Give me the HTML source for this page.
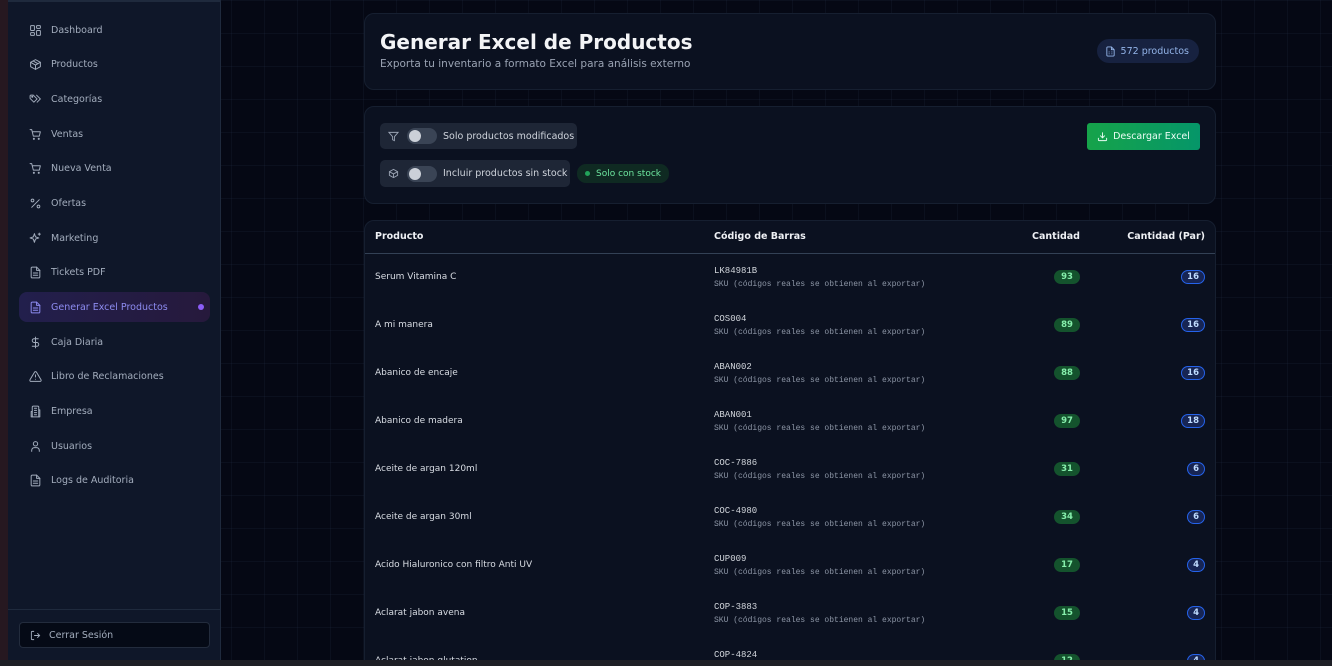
<!DOCTYPE html>
<html><head><meta charset="utf-8"><style>
*{box-sizing:border-box;margin:0;padding:0}
html,body{width:1332px;height:666px;overflow:hidden}
body{background:#050814;font-family:"DejaVu Sans","Liberation Sans",sans-serif;position:relative;
background-image:linear-gradient(rgba(40,50,80,.18) 1px,transparent 1px),linear-gradient(90deg,rgba(40,50,80,.18) 1px,transparent 1px);background-size:33px 33px}
.lstrip{position:absolute;left:0;top:0;width:8px;height:666px;background:#261820}
.bstrip{position:absolute;left:0;top:660px;width:1332px;height:6px;background:#1e1f26;z-index:5}
.side{position:absolute;left:8px;top:0;width:213px;height:660px;background:#0f1729;border-right:1px solid #1f2a3d;border-top:2px solid #1f2a3d}
.nav{position:absolute;left:11px;width:191px;height:30px;display:flex;align-items:center;font-size:9.5px;color:#a3adbd;padding-left:10px}
.nav svg{width:13px;height:13px;margin-right:9px;stroke:#a3adbd;fill:none;stroke-width:1.8;stroke-linecap:round;stroke-linejoin:round}
.nav.act{background:linear-gradient(90deg,#221f4c,#26193c);border-radius:8px;color:#8d8bf0}
.nav.act svg{stroke:#8d8bf0}
.dot{position:absolute;right:6px;top:12px;width:6px;height:6px;border-radius:50%;background:#8b5cf6}
.logout{position:absolute;left:11px;top:620px;width:191px;height:26px;border:1px solid #232c3d;border-radius:4px;background:#050a16;font-size:9.5px;color:#a3adbd;display:flex;align-items:center;padding-left:10px}
.card{position:absolute;left:364px;width:852px;background:#0b1120;border:1px solid #161f30;border-radius:10px}
h1{position:absolute;left:15px;top:16px;font-size:20px;color:#f3f4f6;font-weight:bold}
.sub{position:absolute;left:15px;top:44px;font-size:10.5px;color:#9aa3b3}
.pill{position:absolute;display:flex;align-items:center;font-size:9.5px}
.tog{width:30px;height:16px;background:#3a4455;border-radius:8px;position:relative;margin:0 6px 0 8px}
.tog:after{content:"";position:absolute;left:2px;top:2px;width:12px;height:12px;border-radius:50%;background:#cbd0d8}
table{border-collapse:collapse;width:100%;font-size:9px;table-layout:fixed}
th{height:32px;text-align:left;color:#eef0f4;font-size:9.5px;font-weight:bold;border-bottom:1px solid #334155}
td{height:48px;color:#d8dce3}
.code{font-family:"Liberation Mono","DejaVu Sans Mono",monospace;font-size:9px;color:#d1d5db}
.code small{display:block;font-size:8px;color:#8d96a6;margin-top:4px}
.g{display:inline-block;background:#14532d;color:#86efac;border-radius:8px;font-size:8.5px;font-weight:bold;padding:2px 0;width:26px;text-align:center}
.b{display:inline-block;border:1px solid #2563eb;background:#172554;color:#bfdbfe;border-radius:8px;font-size:8.5px;font-weight:bold;padding:1px 5px;text-align:center}
</style></head><body>
<div class="lstrip"></div>
<div class="side">
<div class="nav" style="top:13px"><svg viewBox="0 0 24 24"><rect x="3" y="3" width="7" height="9" rx="1"/><rect x="14" y="3" width="7" height="5" rx="1"/><rect x="14" y="12" width="7" height="9" rx="1"/><rect x="3" y="16" width="7" height="5" rx="1"/></svg>Dashboard</div>
<div class="nav" style="top:47px"><svg viewBox="0 0 24 24"><path d="M21 8l-9-5-9 5v8l9 5 9-5z"/><path d="M3 8l9 5 9-5M12 13v8M7.5 5.5l9 5"/></svg>Productos</div>
<div class="nav" style="top:82px"><svg viewBox="0 0 24 24"><path d="M2 5v5l7 7 6-6-7-7H3z"/><circle cx="6" cy="7" r="1"/><path d="M14 4l7 7-6 6"/></svg>Categorías</div>
<div class="nav" style="top:117px"><svg viewBox="0 0 24 24"><path d="M2 3h3l3 12h11l2-8H6"/><circle cx="9" cy="20" r="1"/><circle cx="18" cy="20" r="1"/></svg>Ventas</div>
<div class="nav" style="top:151px"><svg viewBox="0 0 24 24"><path d="M2 3h3l3 12h11l2-8H6"/><circle cx="9" cy="20" r="1"/><circle cx="18" cy="20" r="1"/></svg>Nueva Venta</div>
<div class="nav" style="top:186px"><svg viewBox="0 0 24 24"><path d="M19 5L5 19"/><circle cx="6.5" cy="6.5" r="2.5"/><circle cx="17.5" cy="17.5" r="2.5"/></svg>Ofertas</div>
<div class="nav" style="top:221px"><svg viewBox="0 0 24 24"><path d="M10 3l2 6 6 2-6 2-2 6-2-6-6-2 6-2z"/><path d="M19 2v4M17 4h4"/></svg>Marketing</div>
<div class="nav" style="top:255px"><svg viewBox="0 0 24 24"><path d="M14 2H6a2 2 0 0 0-2 2v16a2 2 0 0 0 2 2h12a2 2 0 0 0 2-2V8z"/><path d="M14 2v6h6M8 13h8M8 17h8"/></svg>Tickets PDF</div>
<div class="nav act" style="top:290px"><svg viewBox="0 0 24 24"><path d="M14 2H6a2 2 0 0 0-2 2v16a2 2 0 0 0 2 2h12a2 2 0 0 0 2-2V8z"/><path d="M14 2v6h6M8 13h8M8 17h8"/></svg>Generar Excel Productos<span class="dot"></span></div>
<div class="nav" style="top:325px"><svg viewBox="0 0 24 24"><path d="M12 2v20M17 5H9.5a3.5 3.5 0 0 0 0 7h5a3.5 3.5 0 0 1 0 7H6"/></svg>Caja Diaria</div>
<div class="nav" style="top:359px"><svg viewBox="0 0 24 24"><path d="M10.3 3.9L1.8 18a2 2 0 0 0 1.7 3h17a2 2 0 0 0 1.7-3L13.7 3.9a2 2 0 0 0-3.4 0z"/><path d="M12 9v4M12 17h0"/></svg>Libro de Reclamaciones</div>
<div class="nav" style="top:394px"><svg viewBox="0 0 24 24"><path d="M6 22V4a2 2 0 0 1 2-2h8a2 2 0 0 1 2 2v18z"/><path d="M6 12H4v10h2M18 9h2v13h-2M10 6h4M10 10h4M10 14h4M10 18h4"/></svg>Empresa</div>
<div class="nav" style="top:429px"><svg viewBox="0 0 24 24"><circle cx="12" cy="7" r="4"/><path d="M5 21v-2a5 5 0 0 1 5-5h4a5 5 0 0 1 5 5v2"/></svg>Usuarios</div>
<div class="nav" style="top:463px"><svg viewBox="0 0 24 24"><path d="M14 2H6a2 2 0 0 0-2 2v16a2 2 0 0 0 2 2h12a2 2 0 0 0 2-2V8z"/><path d="M14 2v6h6M8 13h8M8 17h8"/></svg>Logs de Auditoria</div>
<div style="position:absolute;left:0;top:607px;width:212px;border-top:1px solid #1f2a3d"></div>
<div class="logout"><svg viewBox="0 0 24 24" style="width:11px;height:11px;margin-right:8px;stroke:#a3adbd;fill:none;stroke-width:2"><path d="M9 21H5a2 2 0 0 1-2-2V5a2 2 0 0 1 2-2h4M16 17l5-5-5-5M21 12H9"/></svg>Cerrar Sesión</div>
</div>

<div class="card" style="top:13px;height:77px">
<h1>Generar Excel de Productos</h1>
<div class="sub">Exporta tu inventario a formato Excel para análisis externo</div>
<div class="pill" style="right:16px;top:25px;height:24px;padding:0 10px 0 8px;background:#172240;border-radius:12px;color:#93b4e8"><svg viewBox="0 0 24 24" width="11" height="11" style="margin-right:5px;stroke:#93b4e8;fill:none;stroke-width:2"><path d="M14 2H6a2 2 0 0 0-2 2v16a2 2 0 0 0 2 2h12a2 2 0 0 0 2-2V8z"/><path d="M14 2v6h6M8 13h2M14 13h2M8 17h2M14 17h2"/></svg>572 productos</div>
</div>

<div class="card" style="top:106px;height:98px">
<div class="pill" style="left:15px;top:16px;height:26px;width:197px;background:#1e2636;border-radius:5px;color:#cfd4dc;padding-left:8px"><svg viewBox="0 0 24 24" width="11" height="11" style="stroke:#9aa3b3;fill:none;stroke-width:2"><path d="M22 3H2l8 9.5V19l4 2v-8.5z"/></svg><span class="tog"></span>Solo productos modificados</div>
<div class="pill" style="left:15px;top:53px;height:27px;width:190px;background:#1e2636;border-radius:5px;color:#cfd4dc;padding-left:8px"><svg viewBox="0 0 24 24" width="11" height="11" style="stroke:#9aa3b3;fill:none;stroke-width:2"><path d="M21 8l-9-5-9 5v8l9 5 9-5z"/><path d="M3 8l9 5 9-5M12 13v8"/></svg><span class="tog"></span>Incluir productos sin stock</div>
<div class="pill" style="left:212px;top:57px;height:19px;padding:0 8px;background:#0f2a22;border-radius:9px;color:#6ee7a0;font-size:9px"><span style="width:5px;height:5px;border-radius:50%;background:#22a35a;margin-right:6px"></span>Solo con stock</div>
<div class="pill" style="right:15px;top:16px;height:27px;width:113px;justify-content:center;background:linear-gradient(90deg,#16a34a,#059669);border-radius:3px;color:#ecfdf5"><svg viewBox="0 0 24 24" width="11" height="11" style="margin-right:5px;stroke:#ecfdf5;fill:none;stroke-width:2"><path d="M21 15v4a2 2 0 0 1-2 2H5a2 2 0 0 1-2-2v-4M7 10l5 5 5-5M12 15V3"/></svg>Descargar Excel</div>
</div>

<div class="card" style="top:220px;height:450px;overflow:hidden">
<table>
<colgroup><col style="width:349px"><col style="width:250px"><col style="width:116px"><col></colgroup>
<tr><th style="padding-left:10px">Producto</th><th>Código de Barras</th><th style="text-align:right">Cantidad</th><th style="text-align:right;padding-right:10px">Cantidad (Par)</th></tr>
<tr><td style="padding-left:10px">Serum Vitamina C</td><td class="code">LK84981B<small>SKU (códigos reales se obtienen al exportar)</small></td><td style="text-align:right"><span class="g">93</span></td><td style="text-align:right;padding-right:10px"><span class="b">16</span></td></tr>
<tr><td style="padding-left:10px">A mi manera</td><td class="code">COS004<small>SKU (códigos reales se obtienen al exportar)</small></td><td style="text-align:right"><span class="g">89</span></td><td style="text-align:right;padding-right:10px"><span class="b">16</span></td></tr>
<tr><td style="padding-left:10px">Abanico de encaje</td><td class="code">ABAN002<small>SKU (códigos reales se obtienen al exportar)</small></td><td style="text-align:right"><span class="g">88</span></td><td style="text-align:right;padding-right:10px"><span class="b">16</span></td></tr>
<tr><td style="padding-left:10px">Abanico de madera</td><td class="code">ABAN001<small>SKU (códigos reales se obtienen al exportar)</small></td><td style="text-align:right"><span class="g">97</span></td><td style="text-align:right;padding-right:10px"><span class="b">18</span></td></tr>
<tr><td style="padding-left:10px">Aceite de argan 120ml</td><td class="code">COC-7886<small>SKU (códigos reales se obtienen al exportar)</small></td><td style="text-align:right"><span class="g">31</span></td><td style="text-align:right;padding-right:10px"><span class="b">6</span></td></tr>
<tr><td style="padding-left:10px">Aceite de argan 30ml</td><td class="code">COC-4980<small>SKU (códigos reales se obtienen al exportar)</small></td><td style="text-align:right"><span class="g">34</span></td><td style="text-align:right;padding-right:10px"><span class="b">6</span></td></tr>
<tr><td style="padding-left:10px">Acido Hialuronico con filtro Anti UV</td><td class="code">CUP009<small>SKU (códigos reales se obtienen al exportar)</small></td><td style="text-align:right"><span class="g">17</span></td><td style="text-align:right;padding-right:10px"><span class="b">4</span></td></tr>
<tr><td style="padding-left:10px">Aclarat jabon avena</td><td class="code">COP-3883<small>SKU (códigos reales se obtienen al exportar)</small></td><td style="text-align:right"><span class="g">15</span></td><td style="text-align:right;padding-right:10px"><span class="b">4</span></td></tr>
<tr><td style="padding-left:10px">Aclarat jabon glutation</td><td class="code">COP-4824<small>SKU (códigos reales se obtienen al exportar)</small></td><td style="text-align:right"><span class="g">12</span></td><td style="text-align:right;padding-right:10px"><span class="b">4</span></td></tr>
</table>
</div>
<div class="bstrip"></div>
</body></html>
